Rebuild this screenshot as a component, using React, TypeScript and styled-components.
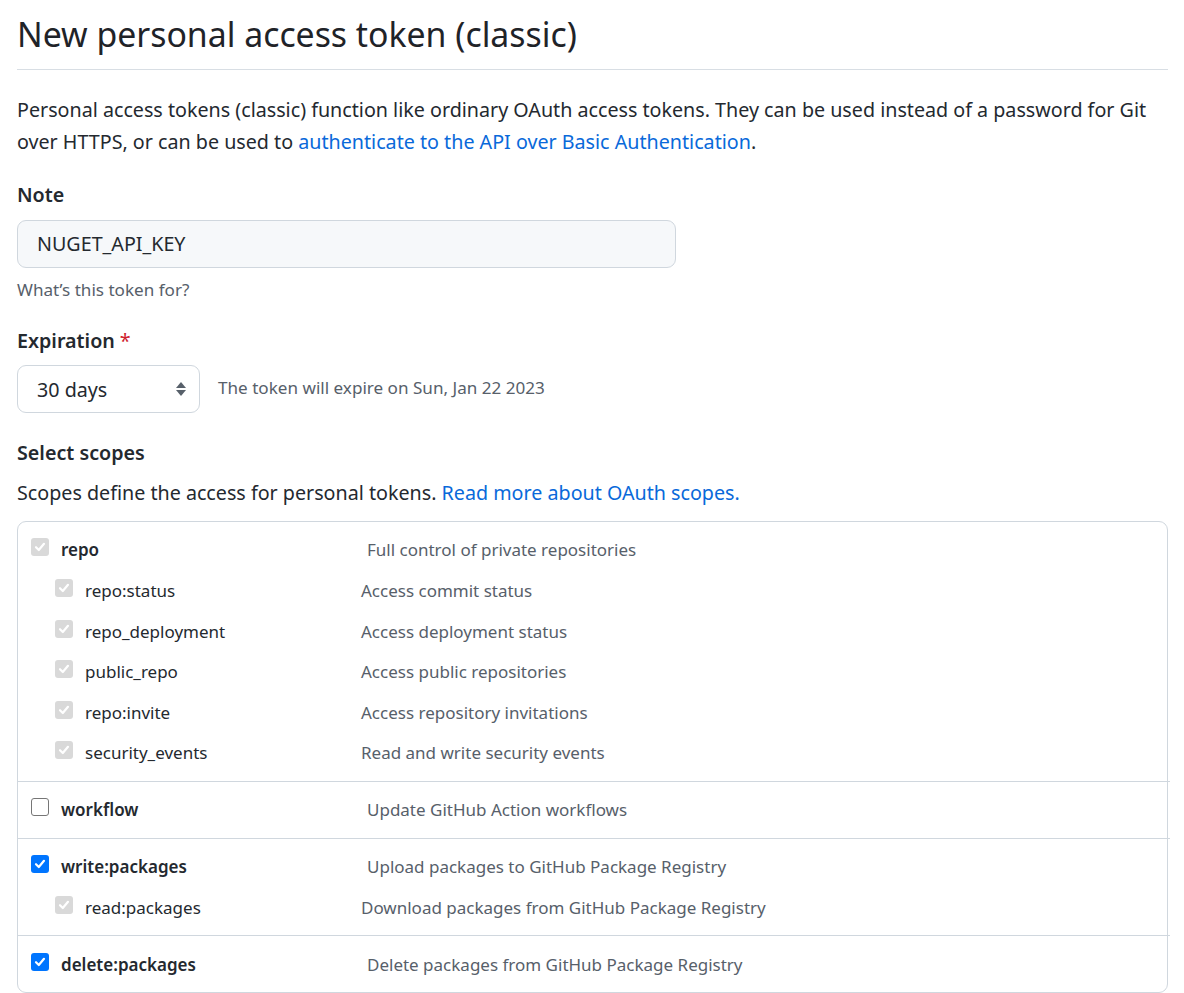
import React from "react";
import styled, { createGlobalStyle } from "styled-components";

const FONT = `"Noto Sans", "Open Sans", "Liberation Sans", sans-serif`;

const Global = createGlobalStyle`
  html, body { margin: 0; padding: 0; background: #ffffff; }
  body { font-family: ${FONT}; color: #24292f; }
  * { box-sizing: border-box; }
`;

const Page = styled.div`
  padding: 11px 16px 0 17px;
  width: 1184px;
`;

const Subhead = styled.div`
  border-bottom: 1px solid #d8dee4;
  padding-bottom: 12px;
  margin-bottom: 24px;
`;

const Title = styled.h2`
  margin: 0;
  font-size: 33.8px;
  line-height: 46px;
  font-weight: 400;
  color: #1f2328;
`;

const Intro = styled.p`
  margin: 0 0 22px;
  font-size: 19.7px;
  line-height: 31.5px;
`;

const Link = styled.a`
  color: #0969da;
  text-decoration: none;
`;

const Label = styled.div<{ $tight?: boolean }>`
  font-size: 19.7px;
  line-height: 31.5px;
  font-weight: 600;
  margin-bottom: ${(p) => (p.$tight ? "8px" : "9px")};
`;

const Required = styled.span`
  color: #cf222e;
  margin-left: 5px;
  font-weight: 400;
`;

const TextInput = styled.div`
  width: 659px;
  height: 48px;
  border: 1px solid #d0d7de;
  border-radius: 9px;
  background: #f6f8fa;
  display: flex;
  align-items: center;
  padding: 0 19px;
  font-size: 19.7px;
`;

const Hint = styled.div`
  font-size: 17.1px;
  line-height: 27px;
  color: #57606a;
  margin-top: 8px;
  margin-bottom: 22px;
`;

const SelectRow = styled.div`
  display: flex;
  align-items: center;
  gap: 18px;
  margin-bottom: 24px;
`;

const Select = styled.div`
  width: 183px;
  height: 48px;
  border: 1px solid #d0d7de;
  border-radius: 9px;
  background: #ffffff;
  display: flex;
  align-items: center;
  justify-content: space-between;
  padding: 0 12px 0 19px;
  font-size: 19.7px;
`;

const ExpireNote = styled.span`
  font-size: 17.1px;
  color: #57606a;
  margin-top: -4px;
`;

const ScopeIntro = styled.p`
  margin: 0 0 13px;
  font-size: 19.7px;
  line-height: 31.5px;
`;

const ScopeBox = styled.div`
  border: 1px solid #d0d7de;
  border-radius: 9px;
`;

const Group = styled.div<{ $last?: boolean }>`
  padding: 7.7px 0 7.7px;
  border-bottom: ${(p) => (p.$last ? "none" : "1px solid #d0d7de")};
  margin-right: ${(p) => (p.$last ? "0" : "-3px")};
`;

const Row = styled.div<{ $child?: boolean }>`
  display: flex;
  align-items: center;
  height: 40.6px;
  padding-left: ${(p) => (p.$child ? "37px" : "13px")};
`;

const ScopeName = styled.span<{ $child?: boolean }>`
  width: ${(p) => (p.$child ? "276px" : "306px")};
  font-size: 17px;
  font-weight: ${(p) => (p.$child ? 400 : 600)};
  color: #24292f;
`;

const ScopeDesc = styled.span`
  font-size: 17px;
  color: #57606a;
`;

type BoxState = "disabled" | "checked" | "unchecked";

const Box = styled.span<{ $state: BoxState }>`
  width: 18px;
  height: 18px;
  border-radius: 3px;
  margin-right: 12px;
  margin-top: -5px;
  flex: none;
  display: inline-flex;
  align-items: center;
  justify-content: center;
  background: ${(p) =>
    p.$state === "disabled" ? "#d9d9d9" : p.$state === "checked" ? "#0075ff" : "#ffffff"};
  border: ${(p) => (p.$state === "unchecked" ? "1.5px solid #767676" : "none")};
`;

const Check = ({ state }: { state: BoxState }) => (
  <Box $state={state}>
    {state !== "unchecked" && (
      <svg width="14" height="14" viewBox="0 0 14 14" fill="none">
        <path
          d="M3 7.2 L5.8 10 L11 3.8"
          stroke="#ffffff"
          strokeWidth="2.2"
          strokeLinecap="round"
          strokeLinejoin="round"
        />
      </svg>
    )}
  </Box>
);

const Arrows = () => (
  <svg width="12" height="18" viewBox="0 0 12 18">
    <path d="M6 2 L11 8 H1 Z" fill="#57606a" />
    <path d="M6 16 L11 10 H1 Z" fill="#57606a" />
  </svg>
);

type Scope = { name: string; desc: string; state: BoxState; child?: boolean };

const groups: Scope[][] = [
  [
    { name: "repo", desc: "Full control of private repositories", state: "disabled" },
    { name: "repo:status", desc: "Access commit status", state: "disabled", child: true },
    { name: "repo_deployment", desc: "Access deployment status", state: "disabled", child: true },
    { name: "public_repo", desc: "Access public repositories", state: "disabled", child: true },
    { name: "repo:invite", desc: "Access repository invitations", state: "disabled", child: true },
    { name: "security_events", desc: "Read and write security events", state: "disabled", child: true },
  ],
  [{ name: "workflow", desc: "Update GitHub Action workflows", state: "unchecked" }],
  [
    { name: "write:packages", desc: "Upload packages to GitHub Package Registry", state: "checked" },
    { name: "read:packages", desc: "Download packages from GitHub Package Registry", state: "disabled", child: true },
  ],
  [{ name: "delete:packages", desc: "Delete packages from GitHub Package Registry", state: "checked" }],
];

export default function App() {
  return (
    <>
      <Global />
      <Page>
        <Subhead>
          <Title>New personal access token (classic)</Title>
        </Subhead>
        <Intro>
          Personal access tokens (classic) function like ordinary OAuth access tokens. They can be used
          instead of a password for Git over HTTPS, or can be used to{" "}
          <Link href="#">authenticate to the API over Basic Authentication</Link>.
        </Intro>

        <Label>Note</Label>
        <TextInput>NUGET_API_KEY</TextInput>
        <Hint>What’s this token for?</Hint>

        <Label>
          Expiration<Required>*</Required>
        </Label>
        <SelectRow>
          <Select>
            <span>30 days</span>
            <Arrows />
          </Select>
          <ExpireNote>The token will expire on Sun, Jan 22 2023</ExpireNote>
        </SelectRow>

        <Label $tight>Select scopes</Label>
        <ScopeIntro>
          Scopes define the access for personal tokens.{" "}
          <Link href="#">Read more about OAuth scopes.</Link>
        </ScopeIntro>

        <ScopeBox>
          {groups.map((g, gi) => (
            <Group key={gi} $last={gi === groups.length - 1}>
              {g.map((s) => (
                <Row key={s.name} $child={s.child}>
                  <Check state={s.state} />
                  <ScopeName $child={s.child}>{s.name}</ScopeName>
                  <ScopeDesc>{s.desc}</ScopeDesc>
                </Row>
              ))}
            </Group>
          ))}
        </ScopeBox>
      </Page>
    </>
  );
}
